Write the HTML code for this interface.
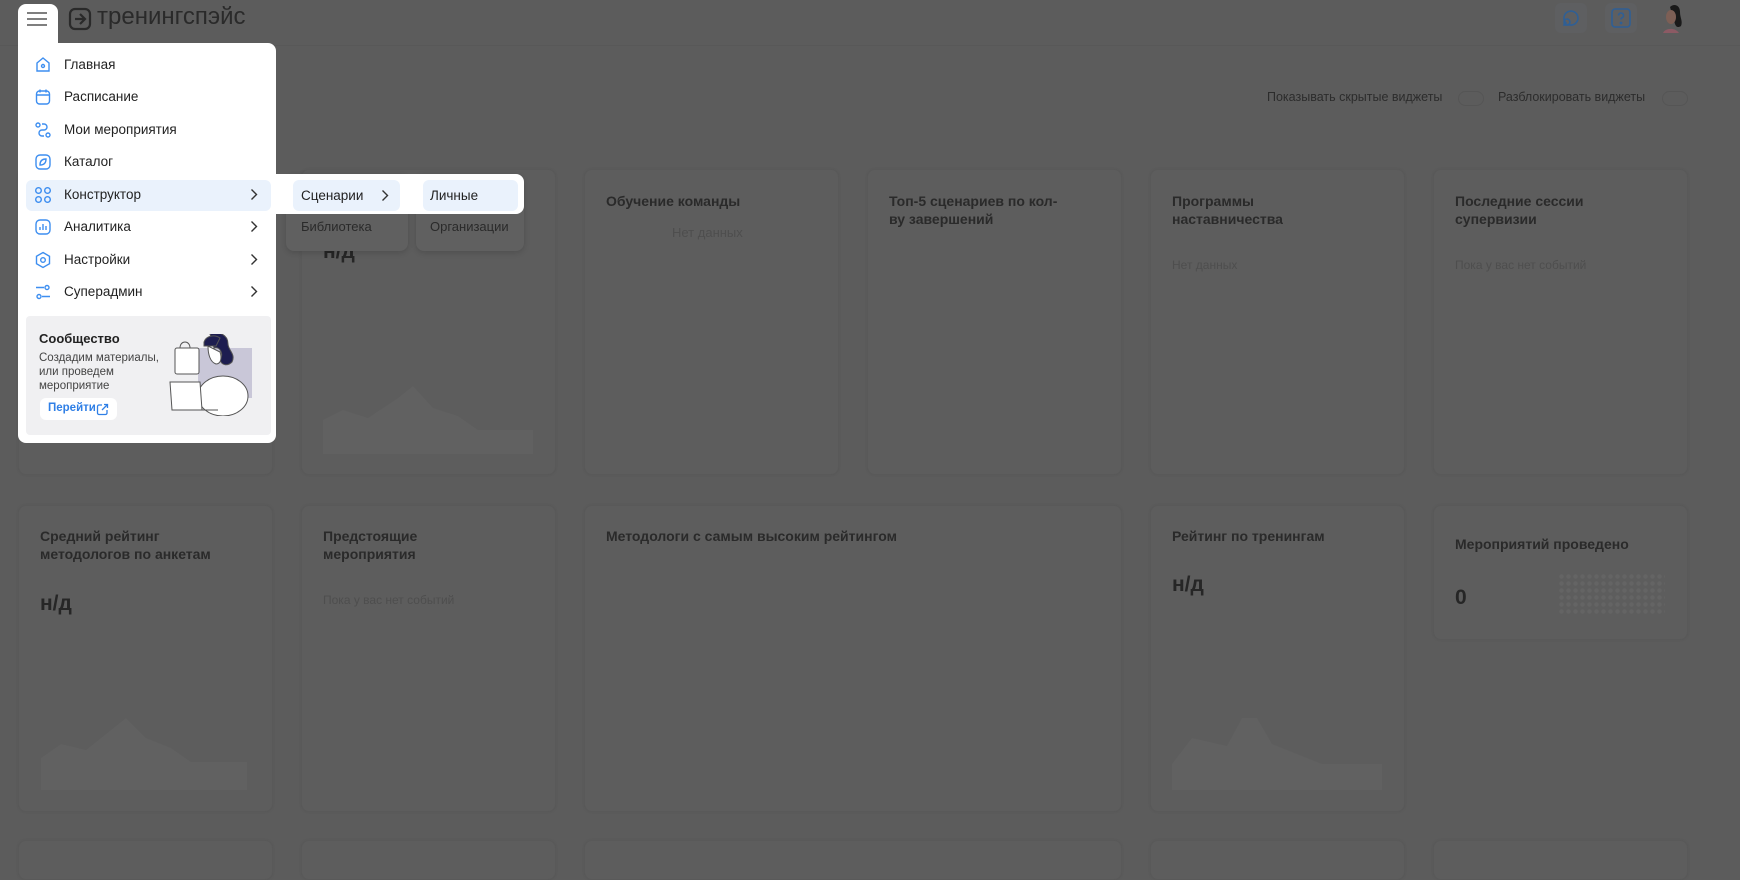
<!DOCTYPE html>
<html><head><meta charset="utf-8">
<style>
*{margin:0;padding:0;box-sizing:border-box}
body{width:1740px;height:854px;overflow:hidden;background:#5c5c5c;font-family:"Liberation Sans","Noto Sans CJK SC",sans-serif;position:relative;color:#262626}
.a{position:absolute}
.card{position:absolute;background:#5d5d5d;border:1px solid #595959;border-radius:8px;box-shadow:0 0 3px rgba(0,0,0,.06)}
.t{position:absolute;font-size:14px;font-weight:bold;color:#2a2a2a;line-height:18px}
.s{position:absolute;font-size:12px;color:#4e4e4e}
.nd{position:absolute;font-size:21px;font-weight:bold;color:#262626}
.mi{position:absolute;left:26px;width:245px;height:31px;font-size:13.5px;color:#222}
.mi span{position:absolute;left:38px;top:7px}
.mi svg.ic{position:absolute;left:8px;top:6px}
.mi .ch{position:absolute;left:224px;top:8px}
</style></head><body>
<!-- header -->
<div class="a" style="left:0;top:45px;width:1740px;height:1px;background:#585858"></div>
<svg class="a" style="left:68px;top:7px" width="24" height="24" viewBox="0 0 24 24" fill="none" stroke="#2a2a2a" stroke-width="2.2"><rect x="2" y="2" width="20" height="20" rx="5"/><path d="M7 12h10M12 7l5 5-5 5"/></svg>
<div class="a" style="left:97px;top:3px;font-size:24px;color:#2a2a2a">тренингспэйс</div>
<div class="a" style="left:1555px;top:3px;width:32px;height:30px;background:#5e5f61;border-radius:6px"></div>
<svg class="a" style="left:1560px;top:7px" width="22" height="22" viewBox="0 0 22 22" fill="none" stroke="#2f5f95" stroke-width="1.6"><path d="M6 16a7 7 0 1 1 4 2H4a3 3 0 0 1 2-2z"/><circle cx="7" cy="15" r="3"/></svg>
<div class="a" style="left:1605px;top:3px;width:32px;height:30px;background:#5e5f61;border-radius:6px"></div>
<svg class="a" style="left:1610px;top:7px" width="22" height="22" viewBox="0 0 22 22" fill="none" stroke="#2f5f95" stroke-width="1.6"><rect x="2" y="2" width="18" height="18" rx="3"/><path d="M8.5 8.5a2.5 2.5 0 1 1 3.5 2.3c-.8.4-1 .9-1 1.7"/><circle cx="11" cy="16" r=".6" fill="#2f5f95"/></svg>
<svg class="a" style="left:1656px;top:1px" width="34" height="34" viewBox="0 0 34 34"><path d="M14 6c4-4 10-2 10 5 0 6 3 9 1 14-3 2-5 1-6-2z" fill="#1a1a1a"/><ellipse cx="15" cy="16" rx="5" ry="7" fill="#7d5f55"/><path d="M7 32c2-5 12-6 16 0z" fill="#8c5a64"/></svg>
<!-- toggles -->
<div class="a" style="left:1267px;top:90px;font-size:12.5px;color:#2c2c2c">Показывать скрытые виджеты</div>
<div class="a" style="left:1458px;top:91px;width:26px;height:15px;border:1.5px solid #555;border-radius:8px"></div>
<div class="a" style="left:1498px;top:90px;font-size:12.5px;color:#2c2c2c">Разблокировать виджеты</div>
<div class="a" style="left:1662px;top:91px;width:26px;height:15px;border:1.5px solid #555;border-radius:8px"></div>
<!-- row1 -->
<div class="card" style="left:18px;top:169px;width:255px;height:306px"></div>
<div class="card" style="left:301px;top:169px;width:255px;height:306px"></div>
<div class="nd" style="left:323px;top:240px">н/д</div>
<svg class="a" style="left:323px;top:380px" width="210" height="74" viewBox="0 0 210 74"><path d="M0 74V40l20-10 25 8 30-20 15-12 20 22 25 8 20 14h55v24z" fill="#616161"/></svg>
<div class="card" style="left:584px;top:169px;width:255px;height:306px"></div>
<div class="t" style="left:606px;top:192px">Обучение команды</div>
<div class="s" style="left:672px;top:225px;font-size:13px">Нет данных</div>
<div class="card" style="left:867px;top:169px;width:255px;height:306px"></div>
<div class="t" style="left:889px;top:192px">Топ-5 сценариев по кол-<br>ву завершений</div>
<div class="card" style="left:1150px;top:169px;width:255px;height:306px"></div>
<div class="t" style="left:1172px;top:192px">Программы<br>наставничества</div>
<div class="s" style="left:1172px;top:258px">Нет данных</div>
<div class="card" style="left:1433px;top:169px;width:255px;height:306px"></div>
<div class="t" style="left:1455px;top:192px">Последние сессии<br>супервизии</div>
<div class="s" style="left:1455px;top:258px">Пока у вас нет событий</div>
<!-- row2 -->
<div class="card" style="left:18px;top:505px;width:255px;height:307px"></div>
<div class="t" style="left:40px;top:527px">Средний рейтинг<br>методологов по анкетам</div>
<div class="nd" style="left:40px;top:592px">н/д</div>
<svg class="a" style="left:41px;top:716px" width="206" height="74" viewBox="0 0 206 74"><path d="M0 74V42l20-14 25 6 25-20 15-12 20 20 25 10 20 14h56v28z" fill="#616161"/></svg>
<div class="card" style="left:301px;top:505px;width:255px;height:307px"></div>
<div class="t" style="left:323px;top:527px">Предстоящие<br>мероприятия</div>
<div class="s" style="left:323px;top:593px">Пока у вас нет событий</div>
<div class="card" style="left:584px;top:505px;width:538px;height:307px"></div>
<div class="t" style="left:606px;top:527px">Методологи с самым высоким рейтингом</div>
<div class="card" style="left:1150px;top:505px;width:255px;height:307px"></div>
<div class="t" style="left:1172px;top:527px">Рейтинг по тренингам</div>
<div class="nd" style="left:1172px;top:573px">н/д</div>
<svg class="a" style="left:1172px;top:716px" width="210" height="74" viewBox="0 0 210 74"><path d="M0 74V48l20-26 35 8 15-28h15l15 26 25 10 25 10h60v26z" fill="#616161"/></svg>
<div class="card" style="left:1433px;top:505px;width:255px;height:135px"></div>
<div class="t" style="left:1455px;top:535px">Мероприятий проведено</div>
<div class="nd" style="left:1455px;top:586px">0</div>
<div class="a" style="left:1558px;top:573px;width:107px;height:41px;background-image:radial-gradient(circle,#646464 2px,transparent 2.5px);background-size:7px 7px"></div>
<!-- row3 -->
<div class="card" style="left:18px;top:840px;width:255px;height:40px"></div>
<div class="card" style="left:301px;top:840px;width:255px;height:40px"></div>
<div class="card" style="left:584px;top:840px;width:538px;height:40px"></div>
<div class="card" style="left:1150px;top:840px;width:255px;height:40px"></div>
<div class="card" style="left:1433px;top:840px;width:255px;height:40px"></div>
<!-- dimmed submenus -->
<div class="a" style="left:286px;top:174px;width:122px;height:77px;background:#606060;border-radius:8px;box-shadow:0 2px 6px rgba(0,0,0,.15)"></div>
<div class="a" style="left:416px;top:174px;width:108px;height:77px;background:#606060;border-radius:8px;box-shadow:0 2px 6px rgba(0,0,0,.15)"></div>
<div class="a" style="left:301px;top:219px;font-size:13px;color:#2a2a2a">Библиотека</div>
<div class="a" style="left:430px;top:219px;font-size:13px;color:#2a2a2a">Организации</div>
<!-- white band -->
<div class="a" style="left:270px;top:174px;width:254px;height:40px;background:#fff;border-radius:0 8px 8px 0"></div>
<div class="a" style="left:293px;top:180px;width:107px;height:31px;background:#eaf2fc;border-radius:6px"></div>
<div class="a" style="left:301px;top:180px;font-size:13.5px;color:#222;line-height:31px">Сценарии</div>
<svg class="a" style="left:381px;top:189px" width="8" height="13" viewBox="0 0 8 13" fill="none" stroke="#333" stroke-width="1.4"><path d="M1.5 1.5l5 5-5 5"/></svg>
<div class="a" style="left:423px;top:180px;width:95px;height:31px;background:#eaf2fc;border-radius:6px"></div>
<div class="a" style="left:430px;top:180px;font-size:13.5px;color:#222;line-height:31px">Личные</div>
<!-- menu -->
<div class="a" style="left:18px;top:4px;width:40px;height:44px;background:#fff;border-radius:8px 8px 0 0"></div>
<svg class="a" style="left:26px;top:11px" width="22" height="16" viewBox="0 0 22 16" stroke="#555" stroke-width="1.6"><path d="M1 2h20M1 8h20M1 14h20"/></svg>
<div class="a" style="left:18px;top:43px;width:258px;height:400px;background:#fff;border-radius:0 8px 8px 8px"></div>
<div class="mi" style="top:50px"><svg class="ic" width="18" height="18" viewBox="0 0 18 18" fill="none" stroke="#3d8ef0" stroke-width="1.4"><path d="M3 7l6-5 6 5v8H3z"/><circle cx="9" cy="10" r="1.5"/></svg><span>Главная</span></div>
<div class="mi" style="top:82px"><svg class="ic" width="18" height="18" viewBox="0 0 18 18" fill="none" stroke="#3d8ef0" stroke-width="1.4"><rect x="2.5" y="3" width="13" height="13" rx="3"/><path d="M2.5 7h13M6 1.5v3M12 1.5v3"/></svg><span>Расписание</span></div>
<div class="mi" style="top:115px"><svg class="ic" width="18" height="18" viewBox="0 0 18 18" fill="none" stroke="#3d8ef0" stroke-width="1.4"><circle cx="4" cy="4" r="2"/><circle cx="14" cy="14" r="2"/><path d="M8 3h2a3 3 0 0 1 0 6H8a3 3 0 0 0 0 6h2"/></svg><span>Мои мероприятия</span></div>
<div class="mi" style="top:147px"><svg class="ic" width="18" height="18" viewBox="0 0 18 18" fill="none" stroke="#3d8ef0" stroke-width="1.4"><rect x="2" y="2" width="14" height="14" rx="4"/><path d="M6 12c0-4 2-6 6-6 0 4-2 6-6 6z"/></svg><span>Каталог</span></div>
<div class="mi" style="top:180px;background:#eaf2fc;border-radius:6px"><svg class="ic" width="18" height="18" viewBox="0 0 18 18" fill="none" stroke="#3d8ef0" stroke-width="1.4"><circle cx="4.5" cy="4.5" r="2.8"/><circle cx="13.5" cy="4.5" r="2.8"/><circle cx="4.5" cy="13.5" r="2.8"/><circle cx="13.5" cy="13.5" r="2.8"/></svg><span>Конструктор</span><svg class="ch" width="8" height="13" viewBox="0 0 8 13" fill="none" stroke="#333" stroke-width="1.4"><path d="M1.5 1.5l5 5-5 5"/></svg></div>
<div class="mi" style="top:212px"><svg class="ic" width="18" height="18" viewBox="0 0 18 18" fill="none" stroke="#3d8ef0" stroke-width="1.4"><rect x="2" y="2" width="14" height="14" rx="4"/><path d="M6 12V9M9 12V6M12 12V8"/></svg><span>Аналитика</span><svg class="ch" width="8" height="13" viewBox="0 0 8 13" fill="none" stroke="#333" stroke-width="1.4"><path d="M1.5 1.5l5 5-5 5"/></svg></div>
<div class="mi" style="top:245px"><svg class="ic" width="18" height="18" viewBox="0 0 18 18" fill="none" stroke="#3d8ef0" stroke-width="1.4"><path d="M9 1.5l6.5 3.75v7.5L9 16.5l-6.5-3.75v-7.5z"/><circle cx="9" cy="9" r="2.3"/></svg><span>Настройки</span><svg class="ch" width="8" height="13" viewBox="0 0 8 13" fill="none" stroke="#333" stroke-width="1.4"><path d="M1.5 1.5l5 5-5 5"/></svg></div>
<div class="mi" style="top:277px"><svg class="ic" width="18" height="18" viewBox="0 0 18 18" fill="none" stroke="#3d8ef0" stroke-width="1.4"><circle cx="13" cy="4.5" r="2"/><circle cx="5" cy="13.5" r="2"/><path d="M2 4.5h8M8 13.5h8"/></svg><span>Суперадмин</span><svg class="ch" width="8" height="13" viewBox="0 0 8 13" fill="none" stroke="#333" stroke-width="1.4"><path d="M1.5 1.5l5 5-5 5"/></svg></div>
<!-- community -->
<div class="a" style="left:26px;top:316px;width:245px;height:119px;background:#f0f0f2;border-radius:4px"></div>
<div class="a" style="left:39px;top:331px;font-size:13px;font-weight:bold;color:#222">Сообщество</div>
<div class="a" style="left:39px;top:351px;font-size:11.5px;color:#444;line-height:14px">Создадим материалы,<br>или проведем<br>мероприятие</div>
<div class="a" style="left:40px;top:398px;width:77px;height:22px;background:#fff;border-radius:6px"></div>
<div class="a" style="left:48px;top:402px;font-size:11.5px;font-weight:bold;color:#2f7fe6">Перейти</div>
<svg class="a" style="left:96px;top:403px" width="13" height="13" viewBox="0 0 13 13" fill="none" stroke="#2f7fe6" stroke-width="1.3"><path d="M6 2H3a1.5 1.5 0 0 0-1.5 1.5v6.5A1.5 1.5 0 0 0 3 11.5h6.5A1.5 1.5 0 0 0 11 10V7M8 1.5h3.5V5M11.5 1.5L6 7"/></svg>
<svg class="a" style="left:168px;top:334px" width="90" height="82" viewBox="0 0 90 82" fill="none" stroke="#555" stroke-width="1"><rect x="30" y="14" width="54" height="50" fill="#c9c7d8" stroke="none"/><rect x="7" y="14" width="24" height="26" rx="2" fill="#fff"/><path d="M12 14c0-8 10-8 10 0"/><ellipse cx="55" cy="62" rx="25" ry="20" fill="#fff"/><path d="M42 0c8-3 18 0 18 10 0 6 8 10 4 18-4 4-10 4-12-2 4-6 0-14-6-12z" fill="#1d1d50"/><path d="M40 12c0 8 2 16 8 18 5 0 6-6 4-12-4-2-8-4-12-6z" fill="#fff"/><path d="M36 8c2-6 10-8 16-4l-4 8-12 0z" fill="#1d1d50"/><path d="M2 48h30l2 28H4z" fill="#fff"/><path d="M30 76h20"/></svg>
</body></html>
